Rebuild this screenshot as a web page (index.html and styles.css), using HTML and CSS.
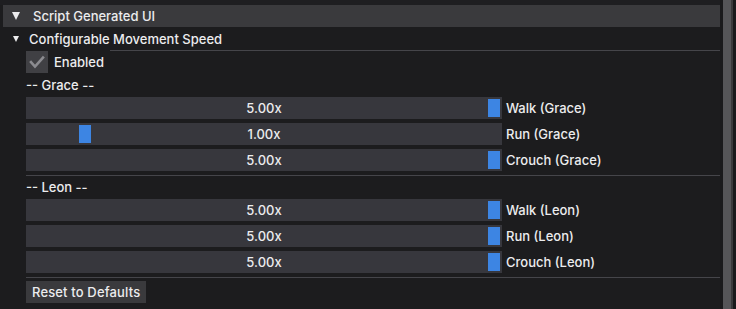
FILE: index.html
```html
<!DOCTYPE html>
<html lang="en">
<head>
    <meta charset="UTF-8">
    <title>Script Generated UI</title>
    <link rel="stylesheet" href="styles.css">
</head>
<body>

<div class="window">
    <div class="content">
        <div class="topstrip"></div>
        <div class="header">
            <span class="arrow big"></span>
            <span class="header-text">Script Generated UI</span>
        </div>

        <div class="tree">
            <span class="arrow small"></span>
            <span>Configurable Movement Speed</span>
        </div>
        <div class="tree-line"></div>

        <div class="body">
            <div class="check-row">
                <span class="checkbox">
                    <svg width="22" height="22" viewBox="0 0 22 22">
                        <polyline points="5,11 9,15.5 17,6.5" fill="none" stroke="#8b8b90" stroke-width="2.6" stroke-linecap="square"/>
                    </svg>
                </span>
                <span>Enabled</span>
            </div>

            <div class="group-label">-- Grace --</div>
            <div class="slider-row">
                <div class="slider"><span class="grab" style="left: 460px"></span><span class="value">5.00x</span></div>
                <span class="label">Walk (Grace)</span>
            </div>
            <div class="slider-row">
                <div class="slider"><span class="grab" style="left: 51px"></span><span class="value">1.00x</span></div>
                <span class="label">Run (Grace)</span>
            </div>
            <div class="slider-row">
                <div class="slider"><span class="grab" style="left: 460px"></span><span class="value">5.00x</span></div>
                <span class="label">Crouch (Grace)</span>
            </div>

            <div class="separator"></div>

            <div class="group-label">-- Leon --</div>
            <div class="slider-row">
                <div class="slider"><span class="grab" style="left: 460px"></span><span class="value">5.00x</span></div>
                <span class="label">Walk (Leon)</span>
            </div>
            <div class="slider-row">
                <div class="slider"><span class="grab" style="left: 460px"></span><span class="value">5.00x</span></div>
                <span class="label">Run (Leon)</span>
            </div>
            <div class="slider-row">
                <div class="slider"><span class="grab" style="left: 460px"></span><span class="value">5.00x</span></div>
                <span class="label">Crouch (Leon)</span>
            </div>

            <div class="separator last"></div>

            <button type="button" class="reset">Reset to Defaults</button>
        </div>
    </div>
    <div class="scrollbar">
        <div class="thumb"></div>
    </div>
</div>

</body>
</html>
```

FILE: styles.css
```css
body {
    margin: 0;
    padding: 0;
    background-color: #1c1c1e;
    font-family: Inter, "Noto Sans", sans-serif;
    font-size: 13px;
    font-weight: 500;
    color: #ececee;
    width: 736px;
    height: 309px;
    overflow: hidden;
}
.window {
    display: flex;
    height: 309px;
}
.content {
    width: 720px;
    flex: none;
}
.topstrip {
    height: 5px;
    background-color: #1e1e21;
}
.header {
    margin-left: 3px;
    height: 22px;
    background-color: #3a3a3d;
    display: flex;
    align-items: center;
}
.arrow {
    display: inline-block;
    width: 0;
    height: 0;
    border-left: solid transparent;
    border-right: solid transparent;
    border-top: solid #ececee;
}
.arrow.big {
    border-width: 8px 4.5px 0 4.5px;
    margin-left: 9px;
    margin-right: 13px;
}
.arrow.small {
    border-width: 6px 3.5px 0 3.5px;
    margin-left: 13px;
    margin-right: 10px;
}
.tree {
    height: 22px;
    display: flex;
    align-items: center;
    margin-top: 1px;
}
.tree-line {
    height: 1px;
    margin-left: 110px;
    margin-bottom: -1px;
    background-color: #45454a;
}
.body {
    padding-left: 26px;
}
.check-row {
    display: flex;
    align-items: center;
    gap: 6px;
    height: 22px;
    margin-top: 1px;
}
.checkbox {
    width: 22px;
    height: 22px;
    background-color: #404044;
    display: block;
}
.checkbox svg {
    display: block;
}
.group-label {
    height: 24px;
    line-height: 25px;
}
.slider-row {
    display: flex;
    align-items: center;
    height: 22px;
    margin-bottom: 4px;
}
.slider {
    position: relative;
    width: 476px;
    height: 22px;
    background-color: #37373d;
    display: flex;
    align-items: center;
    justify-content: center;
}
.grab {
    position: absolute;
    top: 2px;
    width: 12px;
    height: 18px;
    margin-left: 2px;
    background-color: #3d85e3;
}
.value {
    position: relative;
}
.label {
    margin-left: 4px;
}
.separator {
    height: 1px;
    background-color: #45454a;
    margin-bottom: -1px;
}
.separator.last {
    margin-bottom: 3px;
}
.reset {
    font-family: Inter, "Noto Sans", sans-serif;
    font-size: 13px;
    font-weight: 500;
    letter-spacing: 0.15px;
    color: #ececee;
    background-color: #3a3a3d;
    border: none;
    padding: 0 6px;
    height: 22px;
    margin: 0;
}
.scrollbar {
    width: 16px;
    background-color: #1a1a1c;
    padding-left: 3px;
}
.thumb {
    width: 8px;
    height: 309px;
    background-color: #555558;
    border-right: 2px solid #3a3a3c;
}
```
